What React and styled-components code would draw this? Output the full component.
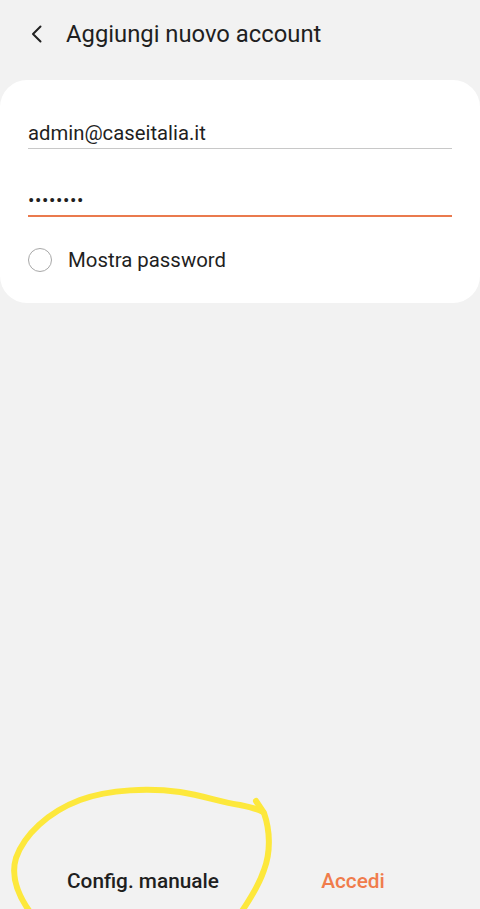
import styled, { createGlobalStyle } from 'styled-components';

const GlobalStyle = createGlobalStyle`
  html, body {
    margin: 0;
    padding: 0;
    background: #f2f2f2;
  }
  body {
    font-family: Roboto, "Noto Sans", sans-serif;
    color: #1f1f1f;
  }
`;

const Screen = styled.div`
  position: relative;
  width: 480px;
  height: 909px;
  background: #f2f2f2;
  display: flex;
  flex-direction: column;
  overflow: hidden;
`;

const Header = styled.header`
  height: 70px;
  display: flex;
  align-items: center;
  padding: 0 0 2px 28px;
  gap: 21px;
  box-sizing: border-box;
`;

const BackButton = styled.button`
  width: 17px;
  height: 24px;
  padding: 0;
  border: 0;
  background: none;
  display: flex;
  align-items: center;
  justify-content: center;
`;

const Title = styled.h1`
  margin: 0;
  font-size: 23.8px;
  font-weight: 400;
  color: #1f1f1f;
`;

const Card = styled.section`
  margin-top: 10px;
  background: #fff;
  border-radius: 27px;
  padding: 34px 28px 0;
  height: 223px;
  box-sizing: border-box;
`;

const Field = styled.div`
  height: ${({ $h }) => $h}px;
  border-bottom: ${({ $active }) => ($active ? '2px solid #ea7a4e' : '1.5px solid #c8c8c8')};
  box-sizing: border-box;
  display: flex;
  align-items: flex-end;
  padding-bottom: ${({ $pb }) => $pb}px;
  font-size: 20.3px;
  color: #1f1f1f;
`;

const Dots = styled.span`
  font-size: 19px;
  letter-spacing: 0.6px;
  line-height: 1;
`;

const CheckRow = styled.label`
  display: flex;
  align-items: center;
  gap: 16px;
  height: 86px;
  font-size: 20.4px;
  color: #1f1f1f;
`;

const Radio = styled.span`
  width: 22px;
  height: 22px;
  border-radius: 50%;
  border: 1.6px solid #a8a8a8;
  box-sizing: content-box;
`;

const Spacer = styled.div`
  flex: 1;
`;

const BottomBar = styled.footer`
  height: 56px;
  display: grid;
  grid-template-columns: 286px 1fr;
  align-items: center;
`;

const TextButton = styled.button`
  border: 0;
  background: none;
  padding: 0;
  font-family: Roboto, "Noto Sans", sans-serif;
  font-size: 20.8px;
  font-weight: 500;
  color: ${({ $accent }) => ($accent ? '#f07c4c' : '#1f1f1f')};
  text-align: center;
  margin-right: ${({ $accent }) => ($accent ? '60px' : '0')};
`;

const Scribble = styled.svg`
  position: absolute;
  left: 0;
  top: 770px;
  width: 300px;
  height: 139px;
  pointer-events: none;
`;

export default function App() {
  return (
    <>
      <GlobalStyle />
      <Screen>
        <Header>
          <BackButton aria-label="Indietro">
            <svg width="13" height="18" viewBox="0 0 13 18">
              <path d="M10.5 1.5 L3 9 L10.5 16.5" fill="none" stroke="#222" strokeWidth="2" strokeLinecap="round" strokeLinejoin="round" />
            </svg>
          </BackButton>
          <Title>Aggiungi nuovo account</Title>
        </Header>
        <Card>
          <Field $h={35} $pb={3}>admin@caseitalia.it</Field>
          <Field $h={68} $pb={5} $active>
            <Dots>••••••••</Dots>
          </Field>
          <CheckRow>
            <Radio />
            Mostra password
          </CheckRow>
        </Card>
        <Spacer />
        <BottomBar>
          <TextButton>Config. manuale</TextButton>
          <TextButton $accent>Accedi</TextButton>
        </BottomBar>
        <Scribble viewBox="0 770 300 139">
          <path
            d="M30 912 C20 898, 10 878, 16 858 C24 835, 48 812, 80 800 C110 789, 150 788, 180 792 C205 796, 220 802, 240 805 C250 807, 258 809, 263 812"
            fill="none" stroke="#fde83c" strokeWidth="6" strokeLinecap="round" strokeLinejoin="round"
          />
          <path
            d="M256 801 L264 813 C270 830, 271 852, 264 870 C258 888, 248 902, 240 914"
            fill="none" stroke="#fde83c" strokeWidth="6" strokeLinecap="round" strokeLinejoin="round"
          />
        </Scribble>
      </Screen>
    </>
  );
}
